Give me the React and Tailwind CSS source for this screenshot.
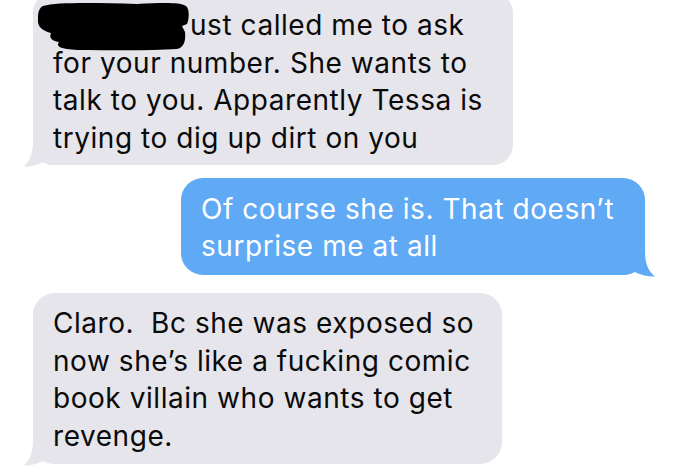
import React from "react";

function TailLeft({ color }) {
  return (
    <svg
      className="absolute left-[-10px] bottom-[-2px]"
      width="32"
      height="26"
      viewBox="0 0 32 26"
    >
      <path
        d="M10 0 C10 12 7 20 1 25.5 C9 25.5 15 23.5 20 21 C24 23 28 24 32 24 L32 0 Z"
        fill={color}
      />
    </svg>
  );
}

function TailRight({ color }) {
  return (
    <svg
      className="absolute right-[-11px] bottom-[-2px]"
      width="33"
      height="26"
      viewBox="0 0 33 26"
    >
      <path
        d="M22 0 C22 12 25 20 32 25.5 C23 25.5 17 23.5 12 21 C8 23 4 24 0 24 L0 0 Z"
        fill={color}
      />
    </svg>
  );
}

export default function App() {
  const font = { fontFamily: "Inter, 'Liberation Sans', sans-serif" };
  return (
    <div
      className="w-[680px] h-[473px] bg-white overflow-hidden relative"
      style={font}
    >
      <div className="flex flex-col mt-[-7px]">
        {/* first bubble */}
        <div className="ml-[33px] w-[480px] relative">
          <div className="relative bg-[#e5e5eb] rounded-[20px] pl-[20px] pr-[16px] pt-[14px] pb-[8px] text-[28px] leading-[37.5px] tracking-[0.55px] text-[#0a0a0a] whitespace-nowrap z-10">
            <div className="relative">
              <span className="inline-block w-[137px]"></span>
              ust called me to ask
              <svg
                className="absolute left-[-16px] top-[-5px]"
                width="154"
                height="50"
                viewBox="0 0 154 50"
              >
                <path
                  d="M6 4 C20 0 60 1 100 2 C125 1 142 0 149 4 C153 7 152 18 150 22 L145 24 L148 30 C149 38 147 46 140 47 C110 49 70 48 40 48 C25 47 18 45 22 40 C14 39 12 35 14 31 C6 29 0 25 1 17 C1 10 2 6 6 4 Z"
                  fill="#000"
                />
              </svg>
            </div>
            <div>for your number. She wants to</div>
            <div>talk to you. Apparently Tessa is</div>
            <div>trying to dig up dirt on you</div>
          </div>
          <TailLeft color="#e5e5eb" />
        </div>

        {/* blue bubble */}
        <div className="ml-[181px] mt-[13px] w-[464px] relative">
          <div className="relative bg-[#5fa9f5] rounded-[22px] pl-[20px] pr-[16px] pt-[13px] pb-[10px] text-[28px] leading-[37px] tracking-[0.55px] text-white whitespace-nowrap z-10">
            <div>Of course she is. That doesn’t</div>
            <div>surprise me at all</div>
          </div>
          <TailRight color="#5fa9f5" />
        </div>

        {/* third bubble */}
        <div className="ml-[33px] mt-[18px] w-[469px] relative">
          <div className="relative bg-[#e5e5eb] rounded-[22px] pl-[20px] pr-[16px] pt-[12px] pb-[9px] text-[28px] leading-[37.5px] tracking-[0.55px] text-[#0a0a0a] whitespace-pre z-10">
            <div>Claro.  Bc she was exposed so</div>
            <div>now she’s like a fucking comic</div>
            <div>book villain who wants to get</div>
            <div>revenge.</div>
          </div>
          <TailLeft color="#e5e5eb" />
        </div>
      </div>
    </div>
  );
}
